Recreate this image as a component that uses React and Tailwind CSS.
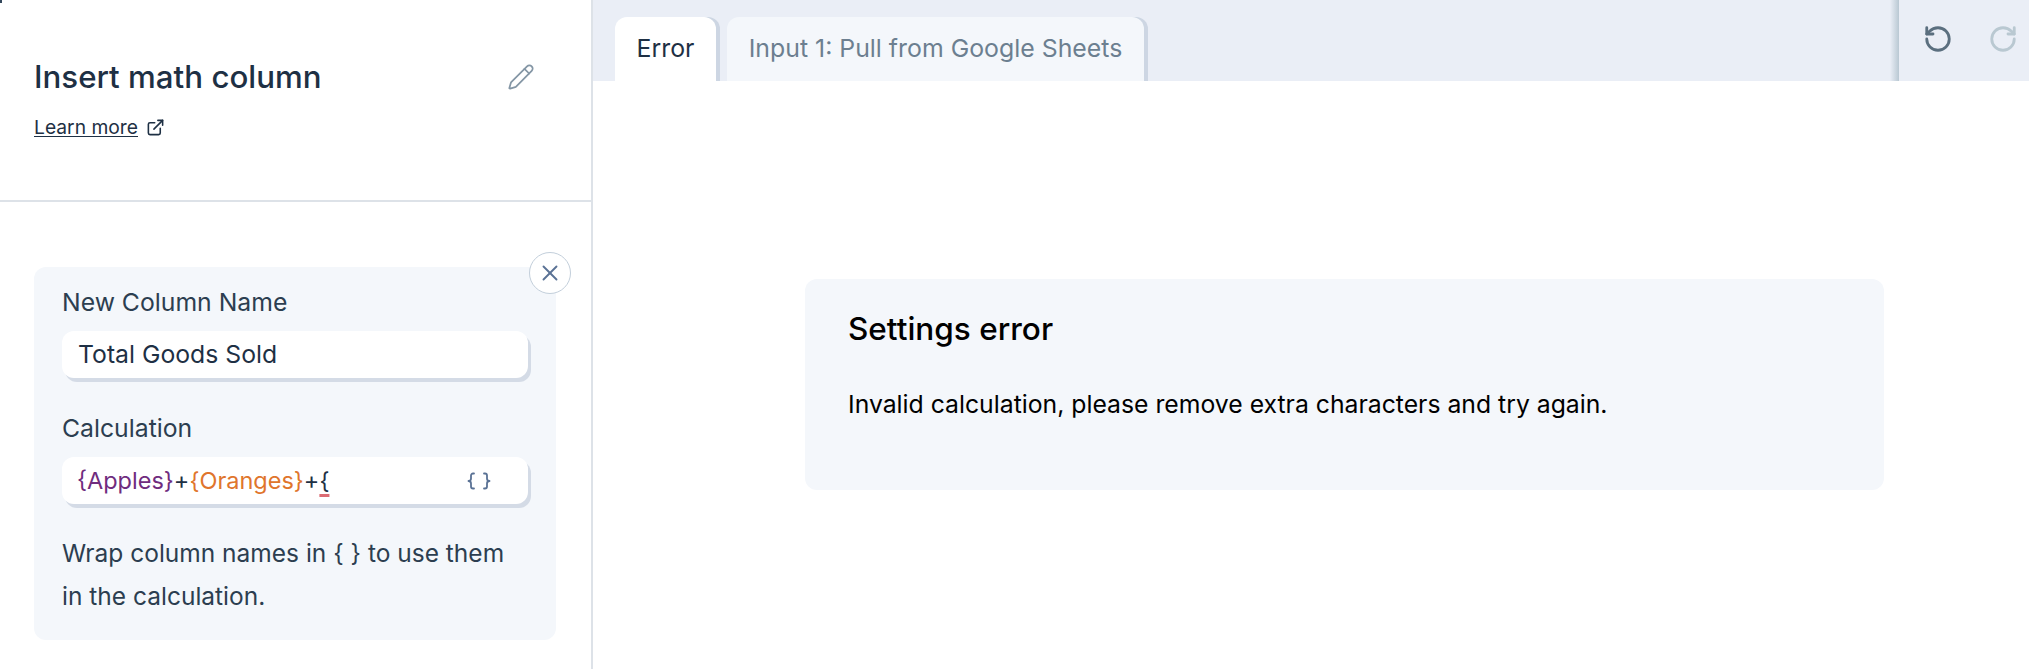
import { Pencil, ExternalLink, X, RotateCcw, RotateCw } from "lucide-react";

export default function App() {
  return (
    <div className="relative flex h-[669px] w-[2029px] overflow-hidden bg-white font-['Inter',sans-serif] text-[#1e3044]">
      <span className="absolute left-0 top-0 h-[3px] w-[2px] bg-[#33475b]" />
      <aside className="flex w-[593px] shrink-0 flex-col border-r-2 border-[#dde2e8]">
        <header className="h-[202px] shrink-0 border-b-2 border-[#dde2e8] pl-[34px] pr-[56px] pt-[57px]">
          <div className="flex items-center justify-between">
            <h1 className="text-[31.25px] leading-[40px] font-medium">Insert math column</h1>
            <Pencil size={28} strokeWidth={1.5} className="text-[#8496a5]" />
          </div>
          <a className="mt-[17px] flex items-center gap-2 text-[19.25px] leading-[26px]">
            <span className="underline underline-offset-2">Learn more</span>
            <ExternalLink size={19} strokeWidth={2} />
          </a>
        </header>
        <div className="pl-[34px] pr-[35px] pt-[65px]">
          <section className="relative rounded-xl bg-[#f4f7fb] px-[28px] pb-[22px] pt-[17px] text-[24.75px] text-[#2c3e50]">
            <button className="absolute -right-[15px] -top-[15px] flex h-[42px] w-[42px] items-center justify-center rounded-full border border-[#c3cfdb] bg-white text-[#5a7295]">
              <X size={26} strokeWidth={1.75} />
            </button>
            <label className="block leading-[36px]">New Column Name</label>
            <div className="mt-[11px] flex h-[47px] items-center rounded-xl bg-white pl-4 text-[#1e3044] shadow-[3px_4px_0_#d4dbe6]">Total Goods Sold</div>
            <label className="mt-[32px] block leading-[36px]">Calculation</label>
            <div className="mt-[11px] flex h-[47px] items-center justify-between rounded-xl bg-white pl-[15px] pr-[37px] text-[23.5px] text-[#1e3044] shadow-[3px_4px_0_#d4dbe6]">
              <div>
                <span className="text-[#702c7e]">{"{Apples}"}</span>
                <span>+</span>
                <span className="text-[#e0752c]">{"{Oranges}"}</span>
                <span>+</span>
                <span className="underline decoration-[#dc6b73] decoration-[3px] underline-offset-[5px]">{"{"}</span>
              </div>
              <svg width="24" height="18" viewBox="0 0 24 18" fill="none" stroke="#5a7295" strokeWidth="1.8" strokeLinecap="round" strokeLinejoin="round">
                <path d="M7 1.5H6a2 2 0 0 0-2 2v3a2.5 2.5 0 0 1-2.5 2.5A2.5 2.5 0 0 1 4 11.5v3a2 2 0 0 0 2 2h1" />
                <path d="M17 1.5h1a2 2 0 0 1 2 2v3a2.5 2.5 0 0 0 2.5 2.5A2.5 2.5 0 0 0 20 11.5v3a2 2 0 0 1-2 2h-1" />
              </svg>
            </div>
            <p className="mt-[28px] text-[24.5px] leading-[43px]">
              Wrap column names in {"{ }"} to use them
              <br />
              in the calculation.
            </p>
          </section>
        </div>
      </aside>
      <main className="flex min-w-0 flex-1 flex-col">
        <div className="flex h-[81px] shrink-0 bg-[#eaeef6] pl-[22px]">
          <div className="flex flex-1 items-end gap-[11px]">
            <div className="flex h-[64px] w-[101px] items-center justify-center rounded-t-xl bg-white text-[24.85px] shadow-[4px_0_0_#cdd6e3]">Error</div>
            <div className="flex h-[64px] w-[417px] items-center justify-center rounded-t-xl bg-[#f4f7fb] text-[24.85px] text-[#6c7f90] shadow-[4px_0_0_#cdd6e3]">Input 1: Pull from Google Sheets</div>
          </div>
          <div className="h-full w-[9px] bg-gradient-to-r from-[#eaeef6] to-[#b9c8d3]" />
          <div className="flex w-[130px] items-center justify-center gap-[35px] pb-[4px] pl-[13px]">
            <RotateCcw size={30} strokeWidth={2.25} className="text-[#5b6f7f]" />
            <RotateCw size={30} strokeWidth={2.25} className="text-[#b9c8d1]" />
          </div>
        </div>
        <div className="flex-1 pl-[212px] pr-[145px] pt-[198px]">
          <section className="h-[211px] rounded-xl bg-[#f4f7fb] px-[43px] pt-[30px] text-black">
            <h2 className="text-[31.5px] leading-[40px] font-medium">Settings error</h2>
            <p className="mt-[37px] text-[24.75px] leading-[36px]">Invalid calculation, please remove extra characters and try again.</p>
          </section>
        </div>
      </main>
    </div>
  );
}
